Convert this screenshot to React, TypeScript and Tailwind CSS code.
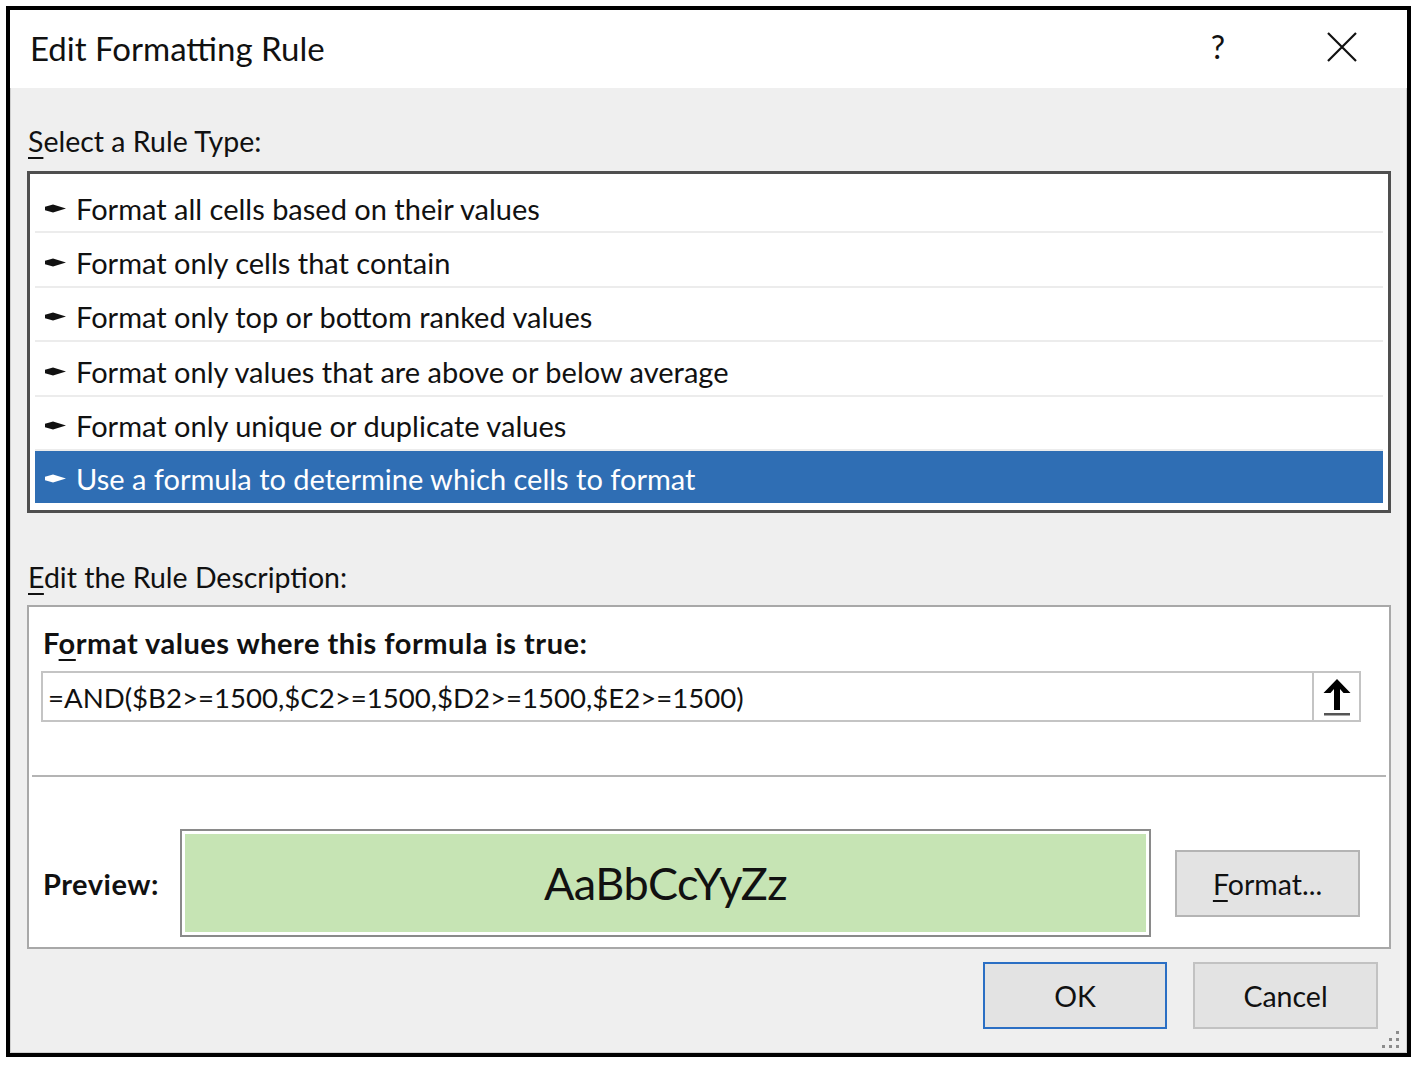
import React from "react";

const items = [
  "Format all cells based on their values",
  "Format only cells that contain",
  "Format only top or bottom ranked values",
  "Format only values that are above or below average",
  "Format only unique or duplicate values",
  "Use a formula to determine which cells to format",
];

function Pointer({ color }: { color: string }) {
  return (
    <svg width="21" height="11" viewBox="0 0 21 11" className="shrink-0">
      <polygon points="0,3.8 8,1.5 21,5.5 8,9.5 0,7.2" fill={color} />
    </svg>
  );
}

export default function App() {
  const font = { fontFamily: "Lato, 'Open Sans', sans-serif" };
  return (
    <div className="w-[1418px] h-[1065px] bg-white pt-[6px] pl-[6px]" style={font}>
      <div className="relative w-[1405px] h-[1051px] border-[4px] border-black bg-[#efefef] flex flex-col text-[#111] shadow-[inset_0_0_0_1px_#cfcfcf]">
        {/* Title bar */}
        <div className="h-[78px] bg-white flex items-center pl-[20px] shrink-0">
          <div className="text-[33px] leading-none flex-1 pb-[1px]">Edit Formatting Rule</div>
          <div className="text-[32px] leading-none mr-[102px] mb-[4px]">?</div>
          <svg width="30" height="30" viewBox="0 0 30 30" className="mr-[50px] mb-[4px]">
            <path d="M1 1 L29 29 M29 1 L1 29" stroke="#111" strokeWidth="2.2" />
          </svg>
        </div>

        {/* Content */}
        <div className="flex-1 flex flex-col pl-[17px] pr-[16px]">
          <div className="pt-[36px] h-[70px] text-[28.5px] leading-[34px] pl-[1px]">
            <u className="underline-offset-[5px] decoration-[2px]">S</u>elect a Rule Type:
          </div>
          <div className="mt-[13px] h-[342px] border-[3px] border-[#4f4f4f] bg-white px-[5px] pt-[5px] pb-[4px] flex flex-col">
            {items.map((t, i) => {
              const sel = i === items.length - 1;
              return (
                <div
                  key={t}
                  className={
                    sel
                      ? "h-[52px] shrink-0 bg-[#2f6eb4] text-white flex items-center pl-[10px] pt-[4px] gap-[10px] text-[29px]"
                      : "h-[54.4px] shrink-0 border-b-[2px] border-[#ececec] flex items-center pl-[10px] pt-[6px] gap-[10px] text-[29px]"
                  }
                >
                  <Pointer color={sel ? "#ffffff" : "#111111"} />
                  <span className="leading-none">{t}</span>
                </div>
              );
            })}
          </div>

          <div className="mt-[47px] text-[28.5px] leading-[34px] pl-[1px]">
            <u className="underline-offset-[5px] decoration-[2px]">E</u>dit the Rule Description:
          </div>

          <div className="mt-[11px] h-[344px] border-[2px] border-[#a8a8a8] bg-white flex flex-col">
            <div className="pt-[19px] pl-[14px] text-[29px] tracking-[0.5px] leading-[34px] font-bold">
              F<u className="underline-offset-[5px] decoration-[2px]">o</u>rmat values where this formula is true:
            </div>
            <div className="mt-[11px] ml-[12px] mr-[28px] h-[51px] border-[2px] border-[#c4c4c4] flex">
              <div className="flex-1 flex items-center pl-[5px] pt-[3px] text-[27.6px] leading-none">
                =AND($B2&gt;=1500,$C2&gt;=1500,$D2&gt;=1500,$E2&gt;=1500)
              </div>
              <div className="w-[49px] -my-[2px] -mr-[2px] border-[2px] border-[#c4c4c4] bg-white flex items-center justify-center">
                <svg width="30" height="40" viewBox="0 0 30 40">
                  <polygon points="15,2 28.5,16 21.5,16 18,12 18,33 12,33 12,12 8.5,16 1.5,16" fill="#000" />
                  <rect x="2" y="36" width="26" height="2.5" fill="#555" />
                </svg>
              </div>
            </div>
            <div className="mt-[53px] mx-[3px] h-[2px] bg-[#b4b4b4]" />
            <div className="mt-[52px] h-[108px] flex items-center pl-[14px] pr-[28px]">
              <div className="w-[137px] text-[29px] tracking-[0.5px] font-bold leading-none">Preview:</div>
              <div className="w-[971px] h-[108px] border-[2px] border-[#8a8a8a] bg-white p-[3px]">
                <div className="w-full h-full bg-[#c6e4b4] flex items-center justify-center">
                  <span className="text-[45px] leading-none tracking-[-0.5px]">AaBbCcYyZz</span>
                </div>
              </div>
              <div className="ml-[24px] w-[185px] h-[67px] border-[2px] border-[#b4b4b4] bg-[#e3e3e3] flex items-center justify-center pt-[2px] text-[28.5px] leading-none">
                <span>
                  <u className="underline-offset-[5px] decoration-[2px]">F</u>ormat...
                </span>
              </div>
            </div>
          </div>

          <div className="mt-[13px] flex justify-end gap-[26px] pr-[13px]">
            <div className="w-[184px] h-[67px] border-[2px] border-[#2b6fc4] bg-[#e3e3e3] flex items-center justify-center pt-[2px] text-[28.5px] leading-none">
              OK
            </div>
            <div className="w-[185px] h-[67px] border-[2px] border-[#c2c2c2] bg-[#e3e3e3] flex items-center justify-center pt-[2px] text-[28.5px] leading-none">
              Cancel
            </div>
          </div>
        </div>

        {/* resize grip */}
        <svg width="20" height="20" viewBox="0 0 20 20" className="absolute right-[6px] bottom-[4px]">
          <rect x="15" y="2" width="3" height="3" fill="#8c8c8c" />
          <rect x="8" y="9" width="3" height="3" fill="#8c8c8c" />
          <rect x="15" y="9" width="3" height="3" fill="#8c8c8c" />
          <rect x="1" y="16" width="3" height="3" fill="#8c8c8c" />
          <rect x="8" y="16" width="3" height="3" fill="#8c8c8c" />
          <rect x="15" y="16" width="3" height="3" fill="#8c8c8c" />
        </svg>
      </div>
    </div>
  );
}
